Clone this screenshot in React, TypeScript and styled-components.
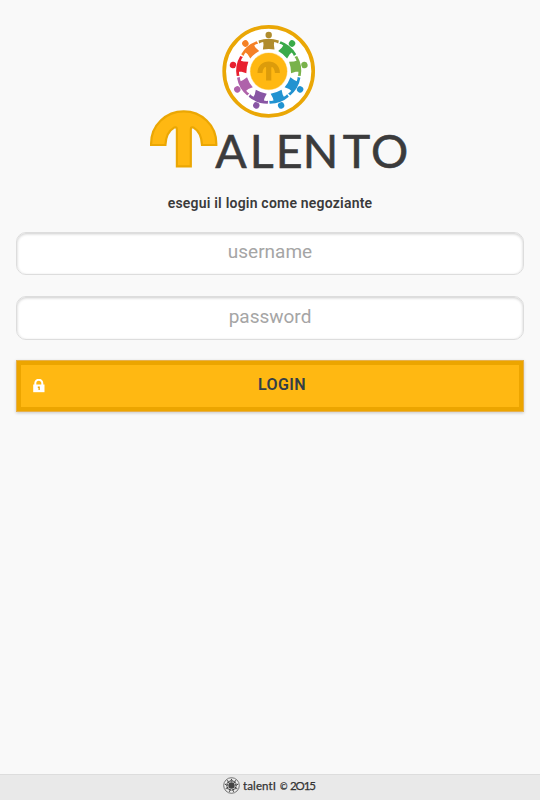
import React from "react";
import styled, { createGlobalStyle } from "styled-components";

const GlobalStyle = createGlobalStyle`
  * { box-sizing: border-box; }
  body { margin: 0; background: #f9f9f9; font-family: Roboto, sans-serif; }
`;

const Page = styled.div`
  display: flex;
  flex-direction: column;
  height: 800px;
  background: #f9f9f9;
`;

const Content = styled.main`
  flex: 1;
  display: flex;
  flex-direction: column;
  padding: 20px 16px 0;
`;

const Logo = styled.svg`
  display: block;
  width: 280px;
  height: 165px;
  margin-left: 124px;
`;

const Wordmark = styled.text`
  font-family: Lato, sans-serif;
  font-size: 46.5px;
  fill: #3b3b3c;
  stroke: #3b3b3c;
  stroke-width: 0.6;
`;

const Heading = styled.h1`
  margin: 8px 0 0;
  height: 20px;
  font-size: 14px;
  line-height: 20px;
  font-weight: 600;
  letter-spacing: 0.21px;
  text-align: center;
  color: #3b3b3b;
`;

const Form = styled.form`
  display: flex;
  flex-direction: column;
  margin-top: 19px;
`;

const Field = styled.input`
  width: 100%;
  height: 43px;
  margin-bottom: 21px;
  padding: 0 8px 4px;
  border: 1px solid #ddd;
  border-radius: 10px;
  outline: 0;
  background: #fff;
  box-shadow: inset 0 1px 3px rgba(0, 0, 0, 0.2);
  font: 400 19px/24px Roboto, sans-serif;
  text-align: center;
  color: #333;
  &::placeholder { color: #a5a5a5; opacity: 1; }
  & + & { height: 44px; margin-bottom: 20px; padding-bottom: 3px; }
`;

const LoginButton = styled.button`
  display: grid;
  grid-template-columns: 24px 1fr;
  align-items: center;
  height: 52px;
  padding: 0 10px 3px;
  border: 1px solid #e6b04c;
  border-radius: 0;
  background: #ffb812;
  box-shadow: inset 0 0 0 4px #eca500, 0 1px 3px rgba(0, 0, 0, 0.2);
  font: 600 16px/20px Roboto, sans-serif;
  letter-spacing: 0.35px;
  color: #333e48;
`;

const LockIcon = styled.svg`
  width: 12px;
  height: 14px;
  margin: 2px 0 0 6px;
`;

const Footer = styled.footer`
  display: flex;
  justify-content: center;
  align-items: center;
  gap: 3px;
  height: 26px;
  padding-bottom: 5px;
  border-top: 1px solid #ddd;
  background: #e9e9e9;
`;

const FooterText = styled.svg`
  width: 74px;
  height: 17px;
  font-family: Lato, sans-serif;
  font-weight: 400;
  font-size: 11.5px;
  fill: #333;
  stroke: #333;
  stroke-width: 0.25;
`;

const Seal = styled.svg`
  width: 17px;
  height: 17px;
`;

const peopleColors = [
  "#b08c2d", "#3aaa49", "#79b24b", "#2293d1", "#2293d1",
  "#8856a4", "#af62aa", "#e8202f", "#f58126",
];

const TalentoLogo = () => (
  <Logo viewBox="140 20 280 165" role="img" aria-label="Talento">
    <g transform="translate(268.7 71.3)">
      <circle r="44.5" fill="#fff" stroke="#eaa706" strokeWidth="3.7" />
      {peopleColors.map((color, i) => (
        <g key={i} transform={`rotate(${i * 40})`} fill={color}>
          <circle cy="-36.3" r="3.2" />
          <path d="M-10.2-30.7Q0-34.6 10.2-30.7L9.5-27.9Q7.5-29 5.5-29.2L5.2-26.5L5.8-21.7Q0-22.8-5.8-21.7L-5.2-26.5L-5.5-29.2Q-7.5-29-9.5-27.9Z" />
        </g>
      ))}
      <circle r="18.9" fill="#ffe5a0" />
      <circle r="18.3" fill="#ffb812" />
      <path d="M-11.2 1.6C-11.2-5.6-6.2-9.8 0-9.8S11.2-5.6 11.2 1.6H6.2C6-1.2 5-3.4 3.4-4.2Q2.6-4.4 2.6-3.4V9.2H-2.6V-3.4Q-2.6-4.4-3.4-4.2C-5-3.4-6-1.2-6.2 1.6Z" fill="#dc9c0b" />
    </g>
    <path
      d="M151.1 145V143.5C151.1 125 166 111.4 183.7 111.4S216.3 125 216.3 143.5V145H202C201.6 136 198.5 130.5 193.6 127.6Q190.8 126.5 190.8 129.5V166.3H176.9V129.5Q176.9 126.5 174.1 127.6C169 130.5 165.8 136 165.4 145Z"
      fill="#ffb812"
      stroke="#eba704"
      strokeWidth="2.2"
    />
    <Wordmark x="215.2 249.7 275.7 302.8 342.7 370.9" y="167.6">ALENTO</Wordmark>
  </Logo>
);

const FooterSeal = () => (
  <Seal viewBox="-8.5 -8.5 17 17" aria-hidden="true">
    <circle r="7.8" fill="#eee" stroke="#555" strokeWidth="0.8" />
    {peopleColors.map((_, i) => (
      <g key={i} transform={`rotate(${i * 40})`} fill="#444">
        <circle cy="-6.1" r="0.65" />
        <path d="M-1.6-5.2H1.6L1.1-3.8H-1.1Z" />
      </g>
    ))}
    <circle r="3.2" fill="#444" />
  </Seal>
);

export default function App() {
  return (
    <Page>
      <GlobalStyle />
      <Content>
        <TalentoLogo />
        <Heading>esegui il login come negoziante</Heading>
        <Form onSubmit={(event) => event.preventDefault()}>
          <Field placeholder="username" aria-label="username" />
          <Field type="password" placeholder="password" aria-label="password" />
          <LoginButton type="submit">
            <LockIcon viewBox="0 0 12 14" aria-hidden="true">
              <path d="M2.3 6V4.2a3.5 3.5 0 0 1 7 0V6" fill="none" stroke="#fff" strokeWidth="2" />
              <path d="M.2 5.5H11.5V13.2H.2Z" fill="#fff" />
              <path d="M4.8 7.5H6.8V11H5.5V9H4.8Z" fill="#eca500" />
            </LockIcon>
            <span>LOGIN</span>
          </LoginButton>
        </Form>
      </Content>
      <Footer>
        <FooterSeal />
        <FooterText>
          <text x="0" y="13" textLength="33">talentI</text>
          <text x="37" y="13" fontSize="9">©</text>
          <text x="47" y="13" textLength="26">2O15</text>
        </FooterText>
      </Footer>
    </Page>
  );
}
